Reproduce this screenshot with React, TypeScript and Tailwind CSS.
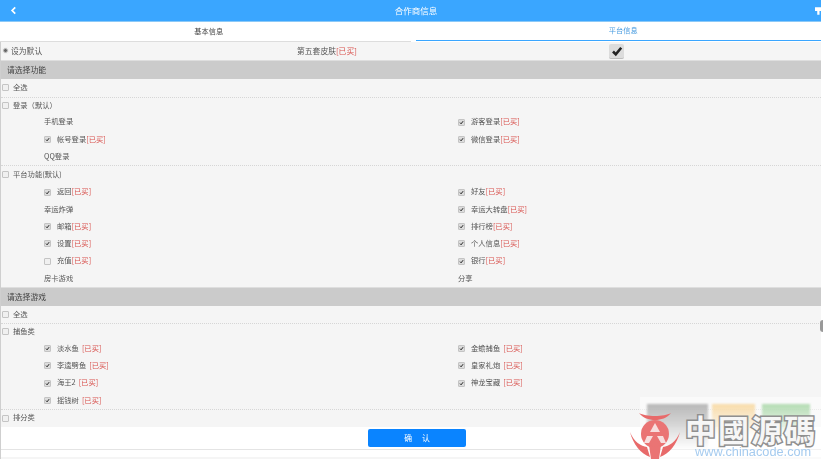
import React from "react";

const font = { fontFamily: '"Noto Sans CJK SC", "Liberation Sans", sans-serif' };

function Box({ checked }: { checked?: boolean }) {
  return (
    <span className={`inline-flex w-[7px] h-[7px] shrink-0 items-center justify-center rounded-[1px] border border-[#c4c4c4] ${checked ? "bg-[#dcdcdc]" : "bg-[#f0f0f0]"}`}>
      {checked && (
        <svg viewBox="0 0 10 10" className="w-[7px] h-[7px]">
          <path d="M2 5.2 L4.2 7.6 L8.2 2.4" fill="none" stroke="#222" strokeWidth="2" />
        </svg>
      )}
    </span>
  );
}

function Bought({ spaced }: { spaced?: boolean }) {
  return <span className={`text-[#d9534f] ${spaced ? "ml-[3px]" : ""}`}>[已买]</span>;
}

type Item = { t: string; c?: boolean; b?: boolean; s?: boolean; plain?: boolean };

function Cell({ item, right }: { item?: Item; right?: boolean }) {
  if (!item) return <div />;
  return (
    <div className={`flex items-center ${right ? "pl-[47px]" : "pl-[43px]"}`}>
      {!item.plain && (
        <span className="mr-[6px] flex">
          <Box checked={item.c} />
        </span>
      )}
      <span>{item.t}</span>
      {item.b && <Bought spaced={item.s} />}
    </div>
  );
}

function Pair({ l, r }: { l?: Item; r?: Item }) {
  return (
    <div className="grid grid-cols-2 h-[17.25px] pt-[1px] items-center text-[7.3px]">
      <Cell item={l} />
      <Cell item={r} right />
    </div>
  );
}

function Head({ t, first, next }: { t: string; first?: boolean; next?: boolean }) {
  const h = first ? "h-[18.5px] border-b border-dotted border-[#d6d6d6]" : next ? "h-[15.5px]" : "h-[17.25px]";
  return (
    <div className={`flex items-center pl-[1px] gap-[4px] text-[7.3px] ${h}`}>
      <Box />
      <span>{t}</span>
    </div>
  );
}

function Section({ t }: { t: string }) {
  return (
    <div className="flex items-center h-[19px] bg-[#cbcbcb] pl-[6px] text-[#444] border-t border-[#dedede]">{t}</div>
  );
}

function Group({ children }: { children: React.ReactNode }) {
  return <div className="border-b border-dotted border-[#d6d6d6]">{children}</div>;
}

export default function App() {
  return (
    <div className="w-[824px] h-[459px] bg-white overflow-hidden relative" style={font}>
      <div className="w-[821px] h-[459px] flex flex-col text-[7.8px] leading-none text-[#555] blur-[0.5px]">
        <div className="h-[22px] shrink-0 bg-[#3aa6ff] border-b border-[#8cc9f7] flex items-center justify-between text-white overflow-hidden">
          <svg viewBox="0 0 10 12" className="w-[7px] h-[9px] ml-[10px]">
            <path d="M7.5 1.5 L3 6 L7.5 10.5" fill="none" stroke="#fff" strokeWidth="2.4" />
          </svg>
          <span className="text-[8.5px]">合作商信息</span>
          <svg viewBox="0 0 8 12" className="w-[6px] h-[10px]">
            <path d="M0 1 H8 V6 H6 V11 H3 V6 H0 Z" fill="#fff" />
          </svg>
        </div>

        <div className="h-[20px] shrink-0 grid grid-cols-2 bg-white text-[7.2px]">
          <div className="flex items-center justify-center border-b border-[#ddd] pl-[7px] text-[#444]">基本信息</div>
          <div className="ml-[5px] mb-[1px] flex items-center justify-center border-b border-[#3aa6ff] pl-[10px] text-[#4a9de0]">平台信息</div>
        </div>

        <div className="flex-1 min-h-0 flex flex-col bg-[#f5f5f5] border-l border-[#cfcfcf]">
          <div className="h-[18px] grid grid-cols-[296px_312px_1fr] items-center">
            <div className="flex items-center pl-[2px] gap-[3px]">
              <span className="w-[5px] h-[5px] rounded-full border border-[#bbb] bg-[#666] ring-1 ring-[#eee]" />
              <span>设为默认</span>
            </div>
            <div>
              第五套皮肤<Bought />
            </div>
            <div className="w-[15px] h-[15px] rounded-[2px] bg-[#dcdcdc] border-b border-[#bdbdbd] flex items-center justify-center">
              <svg viewBox="0 0 12 12" className="w-[12px] h-[12px]">
                <path d="M2 6.5 L4.8 9.4 L10.2 2.8" fill="none" stroke="#222" strokeWidth="2.6" />
              </svg>
            </div>
          </div>

          <Section t="请选择功能" />
          <Head t="全选" first />
          <Group>
            <Head t="登录（默认）" next />
            <Pair l={{ t: "手机登录", plain: true }} r={{ t: "游客登录", c: true, b: true }} />
            <Pair l={{ t: "帐号登录", c: true, b: true }} r={{ t: "微信登录", c: true, b: true }} />
            <Pair l={{ t: "QQ登录", plain: true }} />
          </Group>
          <Head t="平台功能(默认)" />
          <Pair l={{ t: "返回", c: true, b: true }} r={{ t: "好友", c: true, b: true }} />
          <Pair l={{ t: "幸运炸弹", plain: true }} r={{ t: "幸运大转盘", c: true, b: true }} />
          <Pair l={{ t: "邮箱", c: true, b: true }} r={{ t: "排行榜", c: true, b: true }} />
          <Pair l={{ t: "设置", c: true, b: true }} r={{ t: "个人信息", c: true, b: true }} />
          <Pair l={{ t: "充值", b: true }} r={{ t: "银行", c: true, b: true }} />
          <Pair l={{ t: "房卡游戏", plain: true }} r={{ t: "分享", plain: true }} />

          <Section t="请选择游戏" />
          <Head t="全选" first />
          <Group>
            <Head t="捕鱼类" next />
            <Pair l={{ t: "淡水鱼", c: true, b: true, s: true }} r={{ t: "金蟾捕鱼", c: true, b: true, s: true }} />
            <Pair l={{ t: "李逵劈鱼", c: true, b: true, s: true }} r={{ t: "皇家礼炮", c: true, b: true, s: true }} />
            <Pair l={{ t: "海王2", c: true, b: true, s: true }} r={{ t: "神龙宝藏", c: true, b: true, s: true }} />
            <Pair l={{ t: "摇钱树", c: true, b: true, s: true }} />
          </Group>
          <Head t="排分类" />

          <div className="h-[23px] shrink-0 bg-white border-b border-[#e4e4e4] flex items-center justify-center pl-[12px]">
            <div className="w-[98px] h-[18px] rounded-[2px] bg-[#0a84ff] text-white flex items-center justify-center gap-[10px]">
              <span>确</span>
              <span>认</span>
            </div>
          </div>
          <div className="h-[7px] shrink-0 bg-white" />
        </div>
      </div>

      {/* scrollbar knob */}
      <div className="absolute left-[820px] top-[320px] w-[3px] h-[12px] rounded-l-sm bg-[#999] blur-[0.4px]" />

      {/* watermark */}
      <div className="absolute left-[625px] top-[395px] w-[199px] h-[64px] overflow-hidden pointer-events-none">
        <div className="absolute left-[15px] top-[2px] w-[184px] h-[62px] bg-white/50" />
        <div className="absolute left-[22px] top-[9px] w-[61px] h-[46px] bg-gradient-to-b from-[#b8b8b8] to-white/0 blur-[1px]" />
        <div className="absolute left-[87px] top-[9px] w-[43px] h-[32px] bg-gradient-to-b from-[#f8dcaa] to-white/0 blur-[1px]" />
        <div className="absolute left-[137px] top-[9px] w-[48px] h-[32px] bg-gradient-to-b from-[#b4dcb3] to-white/0 blur-[1px]" />
        <svg viewBox="0 0 50 47" className="absolute left-[5px] top-[17px] w-[50px] h-[47px] blur-[0.5px]">
          <path d="M9 1 C16 5 34 5 41 1 C37 6 31 8 25 8 C19 8 13 6 9 1 Z" fill="#e86a6a" />
          <circle cx="25" cy="22" r="14" fill="#ea7474" />
          <path d="M25 11 L30 20 H20 Z" fill="#f7dede" />
          <path d="M17 24 L23 24 L19 31 H14 Z M27 24 L33 24 L36 31 H31 Z" fill="#f7dede" />
          <path d="M0 20 C4 30 11 34 17 35 L20 45 C11 42 3 32 0 20 Z" fill="#e86a6a" />
          <path d="M50 20 C46 30 39 34 33 35 L30 45 C39 42 47 32 50 20 Z" fill="#e86a6a" />
          <path d="M19 33 C23 35 27 35 31 33 L29 47 H21 Z" fill="#ea7474" />
        </svg>
        <div
          className="absolute left-[60px] top-[18px] text-[31px] leading-none font-bold tracking-[2px] text-[#f6f6f6] whitespace-nowrap"
          style={{ fontFamily: '"Noto Sans CJK TC", sans-serif', WebkitTextStroke: "3px #8f8f8f", paintOrder: "stroke fill" }}
        >
          中國源碼
        </div>
        <div
          className="absolute left-[70px] top-[51px] text-[12.75px] leading-none text-[#a5cbef] whitespace-nowrap blur-[0.3px]"
          style={{ fontFamily: '"Liberation Sans", sans-serif' }}
        >
          www.chinacode.com
        </div>
      </div>
    </div>
  );
}
